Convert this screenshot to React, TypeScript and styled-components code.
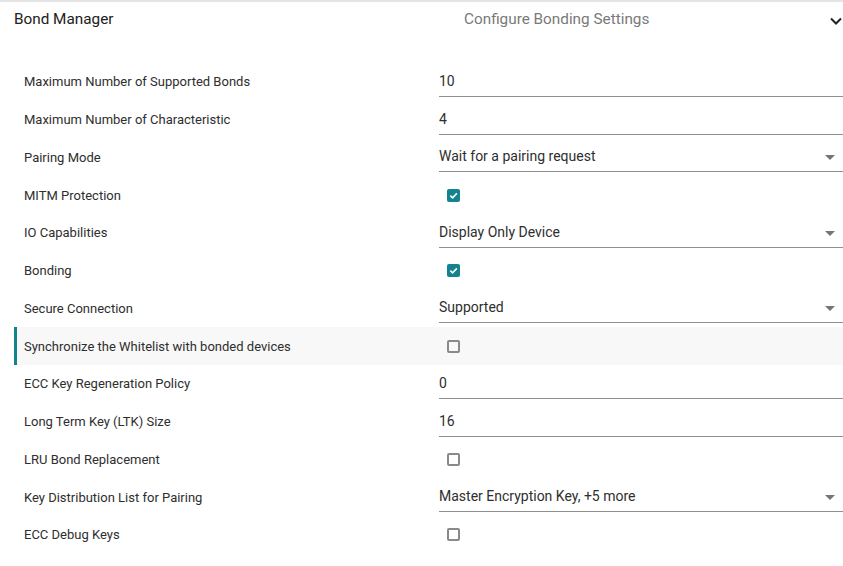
import React from "react";
import styled, { createGlobalStyle } from "styled-components";

const Global = createGlobalStyle`
  html, body {
    margin: 0;
    padding: 0;
    background: #ffffff;
    font-family: Roboto, "Liberation Sans", Arial, sans-serif;
  }
`;

const TEAL = "#12838f";

// Panel
const Panel = styled.div`
  width: 843px;
  height: 566px;
  box-sizing: border-box;
  border-top: 2px solid #e4e4e4;
  overflow: hidden;
`;
const Header = styled.div`
  display: flex;
  align-items: center;
  height: 34px;
  padding-left: 14px;
`;
const Title = styled.div`
  width: 450px;
  font-size: 15.3px;
  color: #212121;
`;
const Subtitle = styled.div`
  flex: 1;
  font-size: 15.3px;
  color: #7a7a7a;
`;
const Chevron = styled.svg`
  width: 14px;
  height: 14px;
  margin-top: 3px;
`;
const List = styled.div`
  display: flex;
  flex-direction: column;
  margin-top: 27px;
  margin-left: 14px;
`;
const Row = styled.div<{ $active?: boolean }>`
  display: grid;
  grid-template-columns: 415px 1fr;
  align-items: center;
  height: 37.75px;
  box-sizing: border-box;
  padding-left: ${(p) => (p.$active ? "7px" : "10px")};
  border-left: ${(p) => (p.$active ? `3px solid ${TEAL}` : "none")};
  background: ${(p) => (p.$active ? "#f8f8f8" : "transparent")};
`;
const Label = styled.div`
  font-size: 13px;
  color: #2e2e2e;
`;
const Field = styled.div`
  position: relative;
  display: flex;
  align-items: center;
  height: 28px;
  margin-top: 2px;
  padding-bottom: 3px;
  box-sizing: border-box;
  border-bottom: 1px solid #8f8f8f;
  font-size: 14px;
  color: #2e2e2e;
`;
const Caret = styled.span`
  position: absolute;
  right: 8px;
  top: 11px;
  width: 0;
  height: 0;
  border-left: 5px solid transparent;
  border-right: 5px solid transparent;
  border-top: 5px solid #757575;
`;
const BoxCell = styled.div`
  display: flex;
  align-items: center;
  height: 30px;
  padding-left: 8px;
`;
const Box = styled.span<{ $on: boolean }>`
  display: inline-flex;
  align-items: center;
  justify-content: center;
  width: 13px;
  height: 13px;
  box-sizing: border-box;
  border-radius: 2px;
  background: ${(p) => (p.$on ? TEAL : "transparent")};
  border: ${(p) => (p.$on ? "none" : "2px solid #8a8a8a")};
`;

type Item =
  | { label: string; kind: "text"; value: string }
  | { label: string; kind: "select"; value: string }
  | { label: string; kind: "check"; value: boolean };

const items: Item[] = [
  { label: "Maximum Number of Supported Bonds", kind: "text", value: "10" },
  { label: "Maximum Number of Characteristic", kind: "text", value: "4" },
  { label: "Pairing Mode", kind: "select", value: "Wait for a pairing request" },
  { label: "MITM Protection", kind: "check", value: true },
  { label: "IO Capabilities", kind: "select", value: "Display Only Device" },
  { label: "Bonding", kind: "check", value: true },
  { label: "Secure Connection", kind: "select", value: "Supported" },
  { label: "Synchronize the Whitelist with bonded devices", kind: "check", value: false },
  { label: "ECC Key Regeneration Policy", kind: "text", value: "0" },
  { label: "Long Term Key (LTK) Size", kind: "text", value: "16" },
  { label: "LRU Bond Replacement", kind: "check", value: false },
  { label: "Key Distribution List for Pairing", kind: "select", value: "Master Encryption Key, +5 more" },
  { label: "ECC Debug Keys", kind: "check", value: false },
];

const Control = ({ item }: { item: Item }) => {
  if (item.kind === "check") {
    return (
      <BoxCell>
        <Box $on={item.value}>
          {item.value && (
            <svg width="9" height="9" viewBox="0 0 10 10">
              <path d="M1.5 5.2 L4 7.6 L8.7 2.6" fill="none" stroke="#fff" strokeWidth="1.8" />
            </svg>
          )}
        </Box>
      </BoxCell>
    );
  }
  return (
    <Field>
      {item.value}
      {item.kind === "select" && <Caret />}
    </Field>
  );
};

const App = () => (
  <>
    <Global />
    <Panel>
      <Header>
        <Title>Bond Manager</Title>
        <Subtitle>Configure Bonding Settings</Subtitle>
        <Chevron viewBox="0 0 14 14">
          <path d="M2 4.5 L7 9.5 L12 4.5" fill="none" stroke="#222" strokeWidth="2" />
        </Chevron>
      </Header>
      <List>
        {items.map((it, i) => (
          <Row key={i} $active={i === 7}>
            <Label>{it.label}</Label>
            <Control item={it} />
          </Row>
        ))}
      </List>
    </Panel>
  </>
);

export default App;
